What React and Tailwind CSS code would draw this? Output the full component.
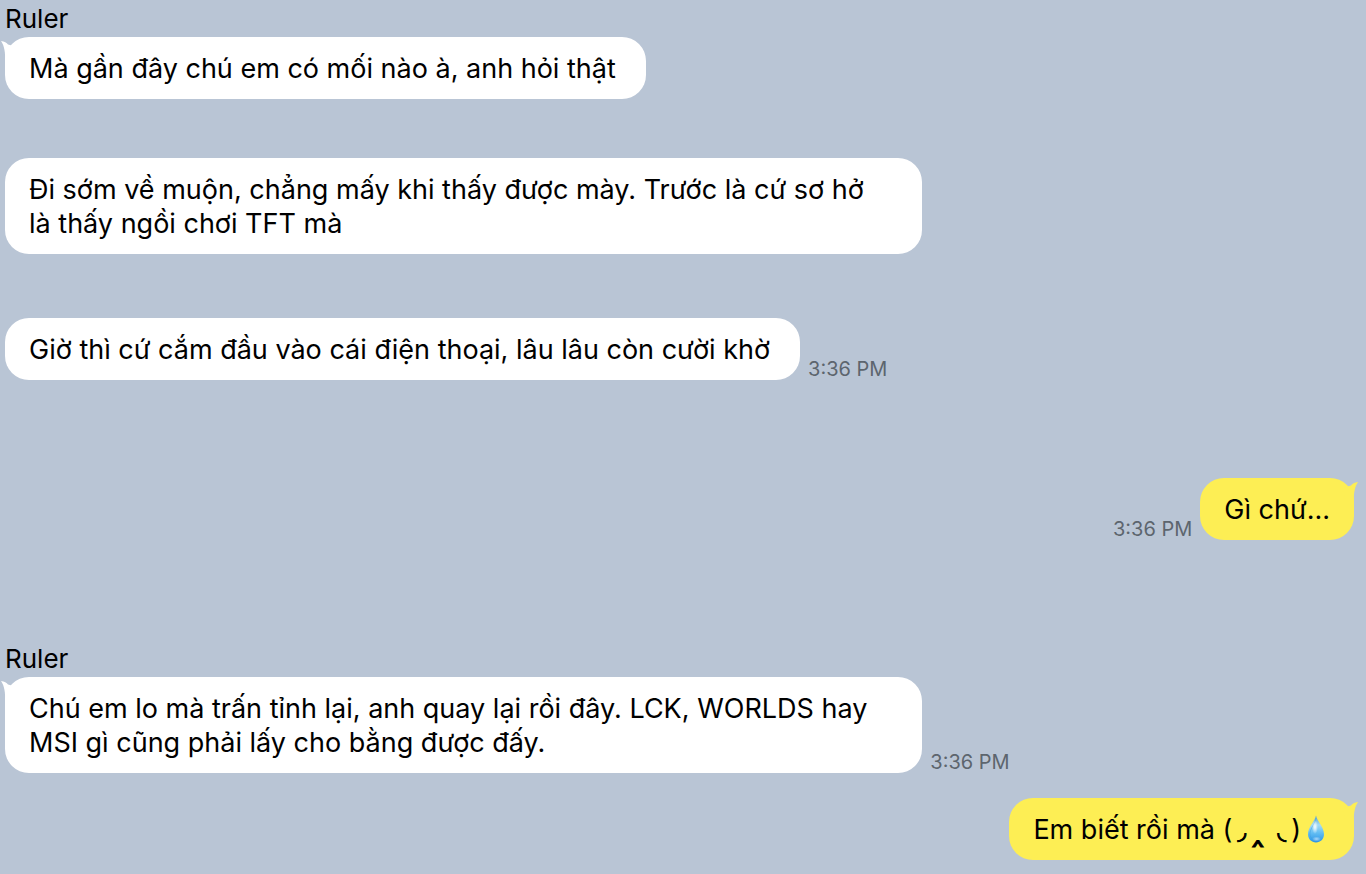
import React from 'react';

const WaterDrop = () => (
  <svg role="img" aria-label="droplet" viewBox="0 0 18 28" className="inline-block w-[18px] h-7 ml-[6px] mr-[5px] align-[-4px]">
    <defs>
      <linearGradient id="drop-body" x1="0" y1="0" x2="0" y2="1">
        <stop offset="0" stopColor="#5b9fc4" />
        <stop offset="0.35" stopColor="#a5dcf5" />
        <stop offset="0.65" stopColor="#62bdf3" />
        <stop offset="1" stopColor="#2b93e6" />
      </linearGradient>
      <radialGradient id="drop-shine" cx="0.5" cy="0.5" r="0.5">
        <stop offset="0" stopColor="#fff" stopOpacity="0.95" />
        <stop offset="1" stopColor="#fff" stopOpacity="0" />
      </radialGradient>
    </defs>
    <path d="M9 0.5C8 6 1 12 1 19.2C1 24 4.500 27.400 9 27.400C13.500 27.400 17 24 17 19.200C17 12 10 6 9 0.500Z" fill="url(#drop-body)" />
    <path d="M9 3C8.500 8 3 13.500 3 19C3 22.500 5.500 25.500 9 25.500" fill="none" stroke="#3d9bdd" strokeWidth="0.8" opacity="0.6" />
    <ellipse cx="8" cy="12" rx="3" ry="7" fill="url(#drop-shine)" />
    <ellipse cx="9.500" cy="24" rx="4.500" ry="2.500" fill="url(#drop-shine)" opacity="0.6" />
  </svg>
);

// sad face: two cheek arcs round a big caret
const SadFace = () => (
  <span className="inline-flex items-baseline gap-[5px]">
    <span>(</span>
    <span className="text-[22px] leading-none [-webkit-text-stroke:1px_black]">◞</span>
    <span className="text-[30px] leading-none [-webkit-text-stroke:1px_black]">‸</span>
    <span className="ml-2 text-[22px] leading-none [-webkit-text-stroke:1px_black]">◟</span>
    <span>)</span>
  </span>
);

const Tail = ({ mine }) => (
  <svg
    aria-hidden="true"
    viewBox="0 0 16 20"
    className={`absolute top-1 w-4 h-5 ${mine ? '-right-1 fill-[#fdee54]' : '-left-1 -scale-x-100 fill-white'}`}
  >
    <path d="M16 0C12.500 0.200 10.300 1.800 9 3.500L0 6L4 20L12 20C11.500 12 12.500 5 16 0Z" />
  </svg>
);

const Message = ({ mine, tail, time, className = '', children }) => (
  <li className={`flex items-end gap-2 ${mine ? 'flex-row-reverse' : ''} ${className}`}>
    <div className={`relative max-w-[68%] pl-6 pt-[15px] pb-[13px] rounded-[24px] text-[27px] leading-[34px] ${mine ? 'pr-6 bg-[#fdee54]' : 'pr-[30px] bg-white'}`}>
      {tail && <Tail mine={mine} />}
      <p className="relative">{children}</p>
    </div>
    {time && <time dateTime="15:36" className="shrink-0 text-[20px] leading-[22px] text-[#5d656e]">{time}</time>}
  </li>
);

const Sender = ({ name }) => <h2 className="text-[26px] leading-[37px]">{name}</h2>;

function App() {
  return (
    <main className="min-h-screen bg-[#b9c5d5] text-black pl-[5px] pr-3 pb-3 font-['Inter','DejaVu_Sans',sans-serif]">
      <section>
        <Sender name="Ruler" />
        <ul>
          <Message tail>Mà gần đây chú em có mối nào à, anh hỏi thật</Message>
          <Message className="mt-[59px]">
            Đi sớm về muộn, chẳng mấy khi thấy được mày. Trước là cứ sơ hở là thấy ngồi chơi TFT mà
          </Message>
          <Message className="mt-16" time="3:36 PM">
            Giờ thì cứ cắm đầu vào cái điện thoại, lâu lâu còn cười khờ
          </Message>
          <Message mine tail className="mt-[98px]" time="3:36 PM">Gì chứ...</Message>
        </ul>
      </section>

      <section className="mt-[100px]">
        <Sender name="Ruler" />
        <ul>
          <Message tail time="3:36 PM">
            Chú em lo mà trấn tỉnh lại, anh quay lại rồi đây. LCK, WORLDS hay MSI gì cũng phải lấy cho bằng được đấy.
          </Message>
          <Message mine tail className="mt-[25px]">
            Em biết rồi mà <SadFace /><WaterDrop />
          </Message>
        </ul>
      </section>
    </main>
  );
}

export default App;
